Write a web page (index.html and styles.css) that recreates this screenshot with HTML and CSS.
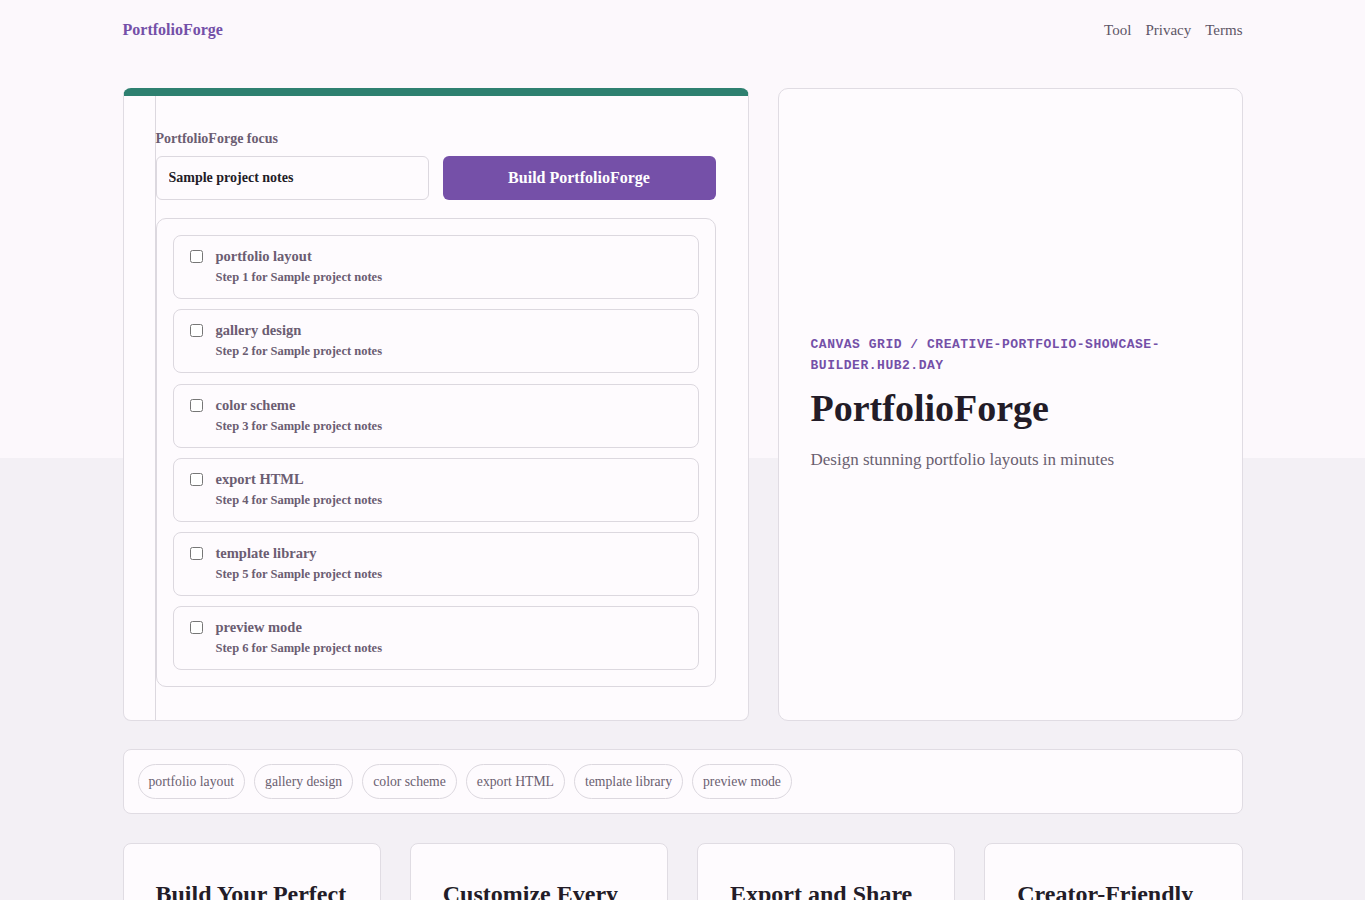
FILE: index.html
```html
<!DOCTYPE html>
<html lang="en">
<head>
    <meta charset="UTF-8">
    <meta name="viewport" content="width=device-width, initial-scale=1.0">
    <title>PortfolioForge</title>
    <link rel="stylesheet" href="styles.css">
</head>
<body>
    <header class="site-header">
        <a class="logo" href="#">PortfolioForge</a>
        <nav class="site-nav">
            <a href="#">Tool</a>
            <a href="#">Privacy</a>
            <a href="#">Terms</a>
        </nav>
    </header>

    <main class="page">
        <section class="hero">
            <div class="tool-card">
                <div class="tool-body">
                    <label class="field-label" for="focus">PortfolioForge focus</label>
                    <div class="field-row">
                        <input class="field-input" id="focus" type="text" value="Sample project notes">
                        <button class="build-btn">Build PortfolioForge</button>
                    </div>
                    <div class="step-list">
                        <label class="step">
                            <input type="checkbox">
                            <span class="step-text">
                                <span class="step-title">portfolio layout</span>
                                <span class="step-sub">Step 1 for Sample project notes</span>
                            </span>
                        </label>
                        <label class="step">
                            <input type="checkbox">
                            <span class="step-text">
                                <span class="step-title">gallery design</span>
                                <span class="step-sub">Step 2 for Sample project notes</span>
                            </span>
                        </label>
                        <label class="step">
                            <input type="checkbox">
                            <span class="step-text">
                                <span class="step-title">color scheme</span>
                                <span class="step-sub">Step 3 for Sample project notes</span>
                            </span>
                        </label>
                        <label class="step">
                            <input type="checkbox">
                            <span class="step-text">
                                <span class="step-title">export HTML</span>
                                <span class="step-sub">Step 4 for Sample project notes</span>
                            </span>
                        </label>
                        <label class="step">
                            <input type="checkbox">
                            <span class="step-text">
                                <span class="step-title">template library</span>
                                <span class="step-sub">Step 5 for Sample project notes</span>
                            </span>
                        </label>
                        <label class="step">
                            <input type="checkbox">
                            <span class="step-text">
                                <span class="step-title">preview mode</span>
                                <span class="step-sub">Step 6 for Sample project notes</span>
                            </span>
                        </label>
                    </div>
                </div>
            </div>

            <div class="intro-card">
                <p class="eyebrow">Canvas Grid / creative-portfolio-showcase-builder.hub2.day</p>
                <h1 class="title">PortfolioForge</h1>
                <p class="lead">Design stunning portfolio layouts in minutes</p>
            </div>
        </section>

        <section class="chip-bar">
            <span class="chip">portfolio layout</span>
            <span class="chip">gallery design</span>
            <span class="chip">color scheme</span>
            <span class="chip">export HTML</span>
            <span class="chip">template library</span>
            <span class="chip">preview mode</span>
        </section>

        <section class="features">
            <article class="feature">
                <h2>Build Your Perfect Portfolio</h2>
                <p>Arrange projects on a flexible grid and tune every tile.</p>
            </article>
            <article class="feature">
                <h2>Customize Every Detail</h2>
                <p>Pick fonts, spacing and colors that fit your work.</p>
            </article>
            <article class="feature">
                <h2>Export and Share</h2>
                <p>Download clean HTML and publish it anywhere.</p>
            </article>
            <article class="feature">
                <h2>Creator-Friendly</h2>
                <p>Made for designers, photographers and developers.</p>
            </article>
        </section>
    </main>
</body>
</html>
```

FILE: styles.css
```css
body {
    margin: 0;
    padding: 0;
    font-family: "Liberation Serif", "Times New Roman", serif;
    color: #231c28;
    background: linear-gradient(180deg, #fcf8fc 0, #fcf8fc 458px, #f3f0f5 458px, #f3f0f5 100%);
    min-height: 100vh;
}
a {
    color: inherit;
    text-decoration: none;
}
.site-header {
    width: 1120px;
    margin: 0 auto;
    height: 60px;
    display: flex;
    align-items: center;
    justify-content: space-between;
}
.logo {
    color: #7450a8;
    font-weight: bold;
    font-size: 16px;
}
.site-nav {
    display: flex;
    gap: 14px;
    font-size: 15px;
    color: #5c5566;
}
.page {
    width: 1120px;
    margin: 28px auto 0;
    display: flex;
    flex-direction: column;
    gap: 28px;
}
.hero {
    display: grid;
    grid-template-columns: 626px 1fr;
    gap: 29px;
}
.tool-card {
    background: #fefbfe;
    border: 1px solid #e0dce3;
    border-top: 8px solid #2e8070;
    border-radius: 8px;
    padding-left: 31px;
}
.tool-body {
    border-left: 1px solid #dcd8df;
    padding: 35px 32px 33px 0;
}
.field-label {
    display: block;
    font-size: 14px;
    font-weight: bold;
    color: #6b5d72;
    margin-bottom: 9px;
}
.field-row {
    display: grid;
    grid-template-columns: 1fr 1fr;
    gap: 14px;
}
.field-input {
    height: 44px;
    box-sizing: border-box;
    border: 1px solid #dcd8df;
    border-radius: 6px;
    background: #fefbfe;
    padding: 0 12px;
    font-family: inherit;
    font-size: 14px;
    font-weight: bold;
    color: #231c28;
}
.build-btn {
    height: 44px;
    border: none;
    border-radius: 6px;
    background: #7550a8;
    color: #ffffff;
    font-family: inherit;
    font-size: 16px;
    font-weight: bold;
}
.step-list {
    margin-top: 18px;
    border: 1px solid #dcd8df;
    border-radius: 10px;
    padding: 16px;
    display: flex;
    flex-direction: column;
    gap: 10.25px;
}
.step {
    display: flex;
    align-items: flex-start;
    gap: 12px;
    height: 64px;
    box-sizing: border-box;
    border: 1px solid #dcd8df;
    border-radius: 8px;
    padding: 12px 16px;
}
.step input {
    margin: 2px 0 0 0;
    width: 13px;
    height: 13px;
}
.step-text {
    display: flex;
    flex-direction: column;
    gap: 5px;
    padding-left: 1px;
}
.step-title {
    font-size: 14.5px;
    font-weight: bold;
    color: #6b5d72;
}
.step-sub {
    font-size: 12.5px;
    font-weight: bold;
    color: #6b5d72;
}
.intro-card {
    background: #fefbfe;
    border: 1px solid #e0dce3;
    border-radius: 10px;
    padding: 0 32px;
    display: flex;
    flex-direction: column;
    justify-content: center;
}
.eyebrow {
    margin: 0;
    font-family: "Liberation Mono", "Courier New", monospace;
    font-size: 13px;
    font-weight: bold;
    letter-spacing: 0.04em;
    line-height: 21px;
    text-transform: uppercase;
    color: #7450a8;
}
.title {
    margin: 10px 0 18px;
    font-size: 38px;
    line-height: 1.2;
    color: #231c28;
}
.lead {
    margin: 0 0 5px;
    font-size: 17px;
    color: #6a5f70;
}
.chip-bar {
    background: #fefbfe;
    border: 1px solid #e0dce3;
    border-radius: 8px;
    padding: 14px;
    display: flex;
    flex-wrap: wrap;
    gap: 9px;
}
.chip {
    border: 1px solid #dcd8df;
    border-radius: 999px;
    padding: 0 10px;
    height: 35px;
    box-sizing: border-box;
    display: flex;
    align-items: center;
    font-size: 13.7px;
    color: #6a6070;
}
.features {
    display: grid;
    grid-template-columns: repeat(4, 1fr);
    gap: 29px;
    margin-top: 1px;
    padding-bottom: 40px;
}
.feature {
    background: #fefbfe;
    border: 1px solid #e0dce3;
    border-radius: 8px;
    padding: 35px 32px 32px;
}
.feature h2 {
    margin: 0 0 12px;
    font-size: 24px;
    line-height: 1.25;
    color: #231c28;
}
.feature p {
    margin: 0;
    font-size: 15px;
    color: #6a5f70;
}
```
